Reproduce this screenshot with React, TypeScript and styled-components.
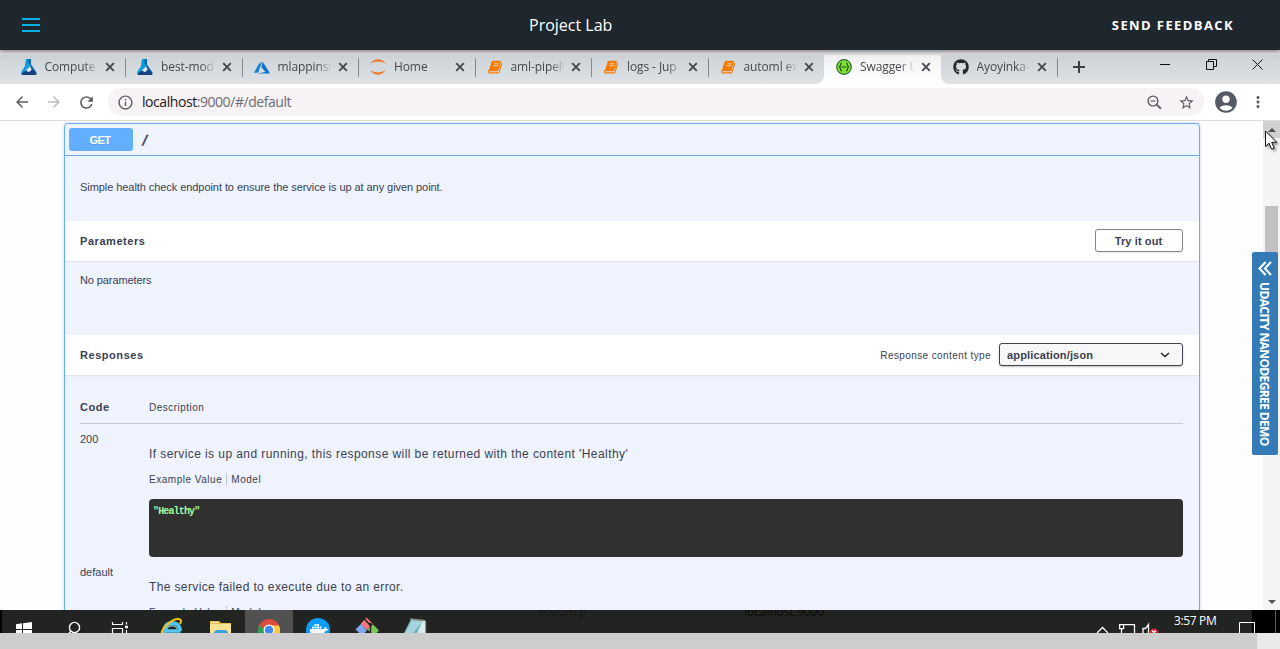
import React, { ReactNode } from "react";
import styled, { createGlobalStyle } from "styled-components";
import {
  MdArrowBack,
  MdArrowForward,
  MdRefresh,
  MdInfoOutline,
  MdStarBorder,
  MdAccountCircle,
  MdMoreVert,
} from "react-icons/md";
import { FaGithub } from "react-icons/fa";

const GlobalStyle = createGlobalStyle`
  * { box-sizing: border-box; }
  body { margin: 0; overflow: hidden; background: #fff; }
  svg { display: block; flex: none; }
`;

const Screen = styled.div`
  position: relative;
  width: 1280px;
  height: 649px;
  display: flex;
  flex-direction: column;
  overflow: hidden;
  font-family: "Liberation Sans", Arial, sans-serif;
  color: #3b4151;
`;

const LabHeader = styled.header`
  height: 50px;
  flex: none;
  display: grid;
  grid-template-columns: 507px auto 1fr;
  align-items: center;
  padding: 0 46px 0 22px;
  background: #1e272e;
  color: #fff;
  font-family: "Open Sans", sans-serif;
  box-shadow: 0 1px 5px rgba(0, 0, 0, 0.55);
  z-index: 2;
`;

const Burger = styled.button`
  width: 18px;
  height: 14px;
  padding: 0;
  border: 0;
  background: none;
  display: flex;
  flex-direction: column;
  justify-content: space-between;
  span { height: 2px; background: #02b3e4; }
`;

const LabTitle = styled.h1`
  margin: 0;
  font-size: 16px;
  line-height: 24px;
  font-weight: 400;
`;

const Feedback = styled.a`
  justify-self: end;
  font-size: 13px;
  font-weight: 700;
  letter-spacing: 1.4px;
`;

const TabStrip = styled.div`
  height: 34px;
  flex: none;
  display: flex;
  border-top: 5px solid #e6e4e4;
  padding-left: 8.5px;
  background: linear-gradient(#ced3d8, #dee2e6);
`;

const Tab = styled.div<{ $active?: boolean; $bare?: boolean }>`
  width: 116.5px;
  height: 29px;
  display: flex;
  align-items: center;
  padding: 0 10px 5px 12px;
  position: relative;
  background: ${(p) => (p.$active ? "linear-gradient(#f1f1f2, #fff)" : "none")};
  &::after {
    content: "";
    display: ${(p) => (p.$bare || p.$active ? "none" : "block")};
    position: absolute;
    right: -1.1px;
    top: 3px;
    height: 19px;
    width: 1px;
    background: #85898e;
  }
`;

const TabCorner = styled.div<{ $side: "left" | "right" }>`
  position: absolute;
  bottom: 0;
  ${(p) => (p.$side === "left" ? "left: -8px" : "right: -8px")};
  width: 8px;
  height: 8px;
  background: radial-gradient(
    circle at ${(p) => (p.$side === "left" ? "0 0" : "100% 0")},
    transparent 7.5px,
    #fff 8px
  );
`;

const TabTitle = styled.span`
  flex: 1;
  margin: 0 5px 0 8px;
  overflow: hidden;
  white-space: nowrap;
  font: 12px/18px "Open Sans", sans-serif;
  letter-spacing: -0.1px;
  color: #45494d;
  mask-image: linear-gradient(90deg, #000 72%, transparent 98%);
`;

const NewTab = styled.div`
  width: 40px;
  padding: 6px 0 0 15.5px;
`;

const WindowButtons = styled.div`
  margin-left: auto;
  display: flex;
  gap: 35px;
  padding: 4px 17.5px 0 0;
`;

const Toolbar = styled.div`
  height: 37px;
  flex: none;
  display: flex;
  align-items: center;
  padding: 0 12px 0 13px;
  background: #fff;
  border-bottom: 1px solid #dcdbe2;
  color: #5a5e63;
`;

const NavButtons = styled.div`
  display: flex;
  gap: 14px;
  width: 95px;
  .dim { color: #bcbdc0; }
`;

const Omnibox = styled.div`
  width: 1096px;
  height: 28px;
  display: flex;
  align-items: center;
  padding: 0 9px;
  border-radius: 14px;
  background: #f6f2f6;
`;

const Url = styled.span`
  flex: 1;
  margin-left: 8px;
  font: 14px/20px "Open Sans", sans-serif;
  letter-spacing: -0.44px;
  color: #6c6c72;
  b { font-weight: 400; color: #202124; }
`;

const OmniActions = styled.div`
  display: flex;
  gap: 15px;
`;

const Profile = styled.div`
  display: flex;
  align-items: center;
  gap: 10px;
  margin-left: 9px;
`;

const Viewport = styled.main`
  height: 489px;
  flex: none;
  display: flex;
  background: #fffcff;
  overflow: hidden;
`;

const Page = styled.div`
  flex: 1;
  padding: 2px 63px 0 64px;
`;

const OpBlock = styled.section`
  height: 600px;
  border: 1px solid #61affe;
  border-radius: 4px;
  background: #eef3fe;
  box-shadow: 0 0 3px rgba(0, 0, 0, 0.19);
  font-size: 11px;
  line-height: 13px;
`;

const OpSummary = styled.div`
  height: 32px;
  display: flex;
  align-items: center;
  padding: 0 4px;
  border-bottom: 1px solid #61a8f0;
`;

const Method = styled.span`
  width: 64px;
  height: 23px;
  margin-right: 8px;
  padding-right: 2px;
  border-radius: 3px;
  background: #61affe;
  color: #fff;
  font-weight: 700;
  letter-spacing: -0.5px;
  line-height: 24px;
  text-align: center;
  text-shadow: 0 1px 0 rgba(0, 0, 0, 0.1);
`;

const Path = styled.b`
  font: 700 13px/16px "DejaVu Sans Mono", monospace;
  -webkit-text-stroke: 0.4px #3b4151;
`;

const Description = styled.div`
  height: 65px;
  padding: 25px 15px 0;
  letter-spacing: -0.065px;
`;

const SectionHeader = styled.div`
  height: 40px;
  display: flex;
  align-items: center;
  padding: 0 16px 0 15px;
  background: #fff;
  box-shadow: 0 1px 1px rgba(0, 0, 0, 0.06);
`;

const Heading = styled.h4`
  flex: 1;
  margin: 0;
  font-size: 11px;
  letter-spacing: 0.55px;
`;

const TryButton = styled.button`
  width: 88px;
  height: 23px;
  margin-top: -1px;
  padding: 0 1px 0 0;
  border: 1px solid #84858c;
  border-radius: 3px;
  background: #fff;
  box-shadow: 0 1px 2px rgba(0, 0, 0, 0.1);
  font: 700 11px "Liberation Sans", sans-serif;
  letter-spacing: 0.1px;
  color: #3b4151;
`;

const TypeLabel = styled.label`
  font-size: 10px;
  letter-spacing: 0.4px;
  margin-right: 8px;
  padding-top: 1px;
`;

const TypeSelect = styled.div`
  width: 184px;
  height: 23px;
  margin-top: -1px;
  display: flex;
  align-items: center;
  justify-content: space-between;
  padding: 1px 12px 0 7px;
  border: 1px solid #41444e;
  border-radius: 3px;
  background: #f7f7f7;
  box-shadow: 0 1px 2px rgba(0, 0, 0, 0.25);
  font-weight: 700;
  letter-spacing: 0.15px;
`;

const NoParameters = styled.div`
  height: 74px;
  padding: 13px 15px 0;
  letter-spacing: -0.1px;
`;

const Responses = styled.div`
  padding: 17px 16px 0 15px;
`;

const Columns = styled.div`
  display: grid;
  grid-template-columns: 69px 1fr;
`;

const ColumnHeads = styled(Columns)`
  height: 32px;
  align-items: center;
  border-bottom: 1px solid #c6cbd9;
`;

const SmallText = styled.span`
  font-size: 10px;
  letter-spacing: 0.48px;
`;

const ResponseRow = styled(Columns)`
  height: 133px;
`;

const Code = styled.span`
  padding-top: 9px;
`;

const ResponseText = styled.p<{ $spacing: number }>`
  margin: 22px 0 0;
  font-size: 12px;
  line-height: 16px;
  letter-spacing: ${(p) => p.$spacing}px;
  white-space: nowrap;
`;

const ModelTabs = styled.div`
  display: flex;
  align-items: center;
  height: 14px;
  margin-top: 10px;
  font-size: 10px;
  letter-spacing: 0.52px;
  span + span {
    margin-left: 4px;
    padding-left: 4px;
    border-left: 1px solid #bfc4d2;
  }
`;

const Sample = styled.pre`
  height: 58px;
  margin: 13px 0 0;
  padding: 7px 4px;
  border-radius: 4px;
  background: #303030;
  color: #a2fca2;
  font: 700 10px/12px "Liberation Mono", monospace;
  letter-spacing: -0.85px;
`;

const ScrollTrack = styled.div`
  width: 17px;
  display: flex;
  flex-direction: column;
  align-items: center;
  background: #f6f3f6;
`;

const ScrollButton = styled.div<{ $pressed?: boolean }>`
  width: 17px;
  height: 17px;
  display: grid;
  place-items: center;
  background: ${(p) => (p.$pressed ? "#d2d0d3" : "transparent")};
`;

const ScrollThumb = styled.div`
  width: 13px;
  height: 120px;
  margin: 68px 0 auto -1px;
  background: #c2c0c3;
`;

const DemoTab = styled.aside`
  position: absolute;
  left: 1252px;
  top: 252px;
  width: 26px;
  height: 203px;
  display: flex;
  flex-direction: column;
  align-items: center;
  padding-top: 9px;
  border-radius: 2px;
  background: #337ab7;
  color: #fff;
  z-index: 3;
`;

const DemoLabel = styled.span`
  margin: 6px 2px 0 0;
  writing-mode: vertical-rl;
  white-space: nowrap;
  font: 700 12px/18px "Open Sans", sans-serif;
  letter-spacing: -0.62px;
`;

const Cursor = styled.svg`
  position: absolute;
  left: 1264px;
  top: 130px;
  filter: drop-shadow(2px 2px 1px rgba(0, 0, 0, 0.35));
  z-index: 4;
`;

const Taskbar = styled.footer`
  position: relative;
  height: 23px;
  flex: none;
  display: flex;
  background: #222421;
  border-left: 2px solid #000;
  overflow: hidden;
`;

const TaskCell = styled.div<{ $w: number; $active?: boolean }>`
  width: ${(p) => p.$w}px;
  flex: none;
  background: ${(p) => (p.$active ? "#515151" : "none")};
`;

const Ghost = styled.span<{ $x: number; $dim?: boolean }>`
  position: absolute;
  left: ${(p) => p.$x}px;
  top: -6px;
  font: 12px/16px "Open Sans", sans-serif;
  letter-spacing: -0.05px;
  color: ${(p) => (p.$dim ? "#161815" : "#090a09")};
`;

const Tray = styled.div`
  margin-left: auto;
  display: flex;
`;

const Clock = styled.span`
  width: 63px;
  padding-left: 9px;
  font: 12px/21px "Open Sans", sans-serif;
  letter-spacing: -0.35px;
  color: #fff;
  white-space: nowrap;
`;

const NotificationIcon = styled.svg`
  position: relative;
  overflow: visible;
  z-index: 1;
`;

const TrayEdge = styled.div`
  width: 28px;
  display: flex;
  justify-content: flex-end;
  padding-right: 4px;
  background: #000;
  span { width: 1px; background: #5a5a5a; }
`;

const BottomScroll = styled.div`
  height: 16px;
  flex: none;
  background: #e9e9e9;
  div { width: 1257px; height: 16px; background: #cdcdcd; }
`;

const Flask = () => (
  <svg width="16" height="16" viewBox="0 0 16 16">
    <path d="M5 0h5v6.500L3 13z" fill="#0b9bdc" />
    <path d="M7.500 0H10v6L7.500 5z" fill="#0068b0" />
    <path d="M5 5.500.5 12.500C-.3 14 .5 16 2 16L8 8.500z" fill="#0f9de0" />
    <path d="m10 5.500 5.200 7.500c.8 1.500 0 3-1.400 3L8.500 9z" fill="#0a62a9" />
    <path d="m4.800 11.800 4-4.300 2 3-2.300 2.200z" fill="#dfe4e8" />
    <path d="M.5 14.800 5 11.500l3 1.700 3-2.700 4.500 4c-.2 1-.9 1.500-1.700 1.500H2c-.8 0-1.300-.4-1.500-1.200z" fill="#173f7d" />
  </svg>
);

const Azure = () => (
  <svg width="16" height="16" viewBox="0 0 16 16">
    <path d="M8.500 2 4.500 5.500 0 13.800h4z" fill="#1180d0" />
    <path d="m9 3 7 11.400H3.200L11.500 13 7.200 8z" fill="#0873c8" />
  </svg>
);

const Jupyter = () => (
  <svg width="16" height="16" viewBox="0 0 16 16">
    <path d="M.6 5C3-1.200 13-1.200 15.400 5 11.500 1.800 4.500 1.800.6 5z" fill="#f37626" />
    <path d="M.6 11c2.400 6.200 12.400 6.200 14.800 0-3.900 3.200-10.900 3.200-14.800 0z" fill="#f37626" />
  </svg>
);

const Notebook = () => (
  <svg width="16" height="16" viewBox="0 0 16 16">
    <path d="M6 1.700h7l1 .5-2.800 9.300-1 .7H2.600L1.800 11.500 4.700 2.400z" fill="#f57c00" />
    <path d="M1.900 11.300c-.8 1.700 0 2.500 1 2.500h8c.7 0 1-.3 1.200-.9L14.700 4" fill="none" stroke="#f57c00" strokeWidth="1.200" />
    <path d="M7 4.800h4.600M6.400 6.700H11" stroke="#fbd2a8" strokeWidth=".9" />
  </svg>
);

const Swagger = () => (
  <svg width="16" height="16" viewBox="0 0 16 16">
    <circle cx="8" cy="8" r="7.300" fill="#7fe22d" stroke="#2e6a3c" strokeWidth="1.200" />
    <path d="M6 4C4 4 5 7 3.500 8 5 9 4 12 6 12M10 4c2 0 1 3 2.500 4-1.500 1-.5 4-2.500 4M5.500 8h5" fill="none" stroke="#23492a" strokeWidth="1.200" />
  </svg>
);

const CloseX = () => (
  <svg width="10" height="10" viewBox="0 0 10 10">
    <path d="m1.200 1.200 7.600 7.600m0-7.600L1.200 8.800" stroke="#46494d" strokeWidth="1.900" />
  </svg>
);

const ZoomOut = () => (
  <svg width="17" height="17" viewBox="0 0 17 17" fill="none" stroke="#5a5e63" strokeWidth="1.400">
    <circle cx="7" cy="7" r="4.900" />
    <path d="M4.500 7h5" strokeWidth="1.200" />
    <path d="m10.600 10.600 4.400 4.200" strokeWidth="1.900" />
  </svg>
);

type TabInfo = { icon: ReactNode; title: string; active?: boolean; bare?: boolean };

const tabs: TabInfo[] = [
  { icon: <Flask />, title: "Compute" },
  { icon: <Flask />, title: "best-mod" },
  { icon: <Azure />, title: "mlappinsi" },
  { icon: <Jupyter />, title: "Home" },
  { icon: <Notebook />, title: "aml-pipeli" },
  { icon: <Notebook />, title: "logs - Jup" },
  { icon: <Notebook />, title: "automl ex", bare: true },
  { icon: <Swagger />, title: "Swagger U", active: true },
  { icon: <FaGithub size={16} color="#23282d" />, title: "Ayoyinka-" },
];

const responses = [
  { code: "200", text: "If service is up and running, this response will be returned with the content 'Healthy'", sample: '"Healthy"', spacing: 0.425 },
  { code: "default", text: "The service failed to execute due to an error.", sample: "", spacing: 0.37 },
];

const Tasks = () => (
  <>
    <TaskCell $w={46}>
      <svg width="46" height="23">
        <path d="M14 14.200 20 13.300V19h-6zM21 13.200l9-1.200v7h-9zM14 20h6v5h-6zM21 20h9v5h-9z" fill="#fff" />
      </svg>
    </TaskCell>
    <TaskCell $w={48}>
      <svg width="48" height="23" fill="none" stroke="#fff" strokeWidth="1.400">
        <circle cx="26.500" cy="17.500" r="5.100" />
        <path d="m23 21-3.500 4" />
      </svg>
    </TaskCell>
    <TaskCell $w={51}>
      <svg width="51" height="23" fill="none" stroke="#fff" strokeWidth="1.200">
        <path d="M16.500 12v2.500h10V12M16.500 25v-6.500h10V25M30.500 12v2.500M30.500 20v4" />
        <path d="M29 17h3" strokeWidth="2.500" />
      </svg>
    </TaskCell>
    <TaskCell $w={49}>
      <svg width="49" height="23" fill="none">
        <path d="M33.500 21H18.500" stroke="#55c8f2" strokeWidth="3.500" />
        <path d="M17 24c0-7 3-11 8.500-11 4.500 0 7.500 3 7.500 8" stroke="#4cc3f0" strokeWidth="4" />
        <path d="M20 19c1-4 9-4.500 10 0" stroke="#b9ecfb" strokeWidth="1" />
        <path d="M14.500 24c0-6 11-15.500 17-15 3 .3 3 2.500 1.500 5" stroke="#f2c419" strokeWidth="2" />
      </svg>
    </TaskCell>
    <TaskCell $w={49}>
      <svg width="49" height="23">
        <path d="M14 11h9l2 2h10v10H14z" fill="#e8bd4d" />
        <path d="M14 14h21v9H14z" fill="#fde494" />
        <path d="M15 12h7v1h-7z" fill="#fff3c4" />
        <path d="M18 23v-1l2-2h10l2 2v1z" fill="#3aa5dc" />
      </svg>
    </TaskCell>
    <TaskCell $w={48} $active>
      <svg width="48" height="23">
        <circle cx="24" cy="20" r="11" fill="#dd4b3e" />
        <path d="M14.500 14.500A11 11 0 0 0 13 20v4h9z" fill="#2a9d57" />
        <path d="M24 15.500h10A11 11 0 0 1 35 20v4h-8z" fill="#fcca3c" />
        <circle cx="24" cy="20" r="5.500" fill="#fff" />
        <circle cx="24" cy="20" r="4.300" fill="#4688f1" />
      </svg>
    </TaskCell>
    <TaskCell $w={49}>
      <svg width="49" height="23">
        <circle cx="25" cy="20" r="12" fill="#0b9cf7" />
        <path d="M17 19h14c.5-1.500 1-2 1.500-2.200.8.500 1 1.500.8 2.200h2c-.5 1.500-1.500 2-3 2-1 2-2.500 4-4.500 4h-7c-3 0-4-3-3.800-6zM19 16.500h2v2h-2zM21.500 16.500h2v2h-2zM24 16.500h2v2h-2zM26.500 16.500h2v2h-2zM21.500 14h2v2h-2zM24 14h2v2h-2z" fill="#fff" />
      </svg>
    </TaskCell>
    <TaskCell $w={49}>
      <svg width="49" height="23">
        <path d="m24.500 7.500 6.500 6.500-6 6-6.500-6z" fill="#f4777e" />
        <path d="m19 14 6 6.500-5 5-6.500-6z" fill="#80a8f5" />
        <path d="m31 14.500 6 6-5 5-6.500-6z" fill="#80c75b" />
        <path d="m22 8.500 6.500 7M28.500 14v9" stroke="#222421" strokeWidth="1.500" />
        <circle cx="28.500" cy="14.500" r="1.700" fill="#222421" />
      </svg>
    </TaskCell>
    <TaskCell $w={49}>
      <svg width="49" height="23">
        <path d="m20 9 14 2-4 12H13z" fill="#6fb0be" />
        <path d="m21 10 11 1.500L22 23h-8z" fill="#a9d3dc" />
        <path d="M32 10.500h2.500V23H26z" fill="#d9edf0" />
        <path d="m19 9 14 1.500" stroke="#8d8d86" strokeWidth="1.500" />
        <path d="M34.800 11v12" stroke="#a78a52" strokeWidth=".8" />
      </svg>
    </TaskCell>
  </>
);

export default function App() {
  return (
    <Screen>
      <GlobalStyle />
      <LabHeader>
        <Burger aria-label="Menu"><span /><span /><span /></Burger>
        <LabTitle>Project Lab</LabTitle>
        <Feedback>SEND FEEDBACK</Feedback>
      </LabHeader>

      <TabStrip>
        {tabs.map((t) => (
          <Tab key={t.title} $active={t.active} $bare={t.bare}>
            {t.active && <TabCorner $side="left" />}
            {t.icon}
            <TabTitle>{t.title}</TabTitle>
            <CloseX />
            {t.active && <TabCorner $side="right" />}
          </Tab>
        ))}
        <NewTab>
          <svg width="12" height="12"><path d="M6 0v12M0 6h12" stroke="#3c4043" strokeWidth="2" /></svg>
        </NewTab>
        <WindowButtons>
          <svg width="11" height="11"><path d="M0 5.500h10" stroke="#111" /></svg>
          <svg width="11" height="11" fill="none" stroke="#111"><path d="M.5 2.500h7v8h-7zM2.500 2.500v-2h8v7h-3" /></svg>
          <svg width="11" height="11"><path d="m.5.5 10 10m0-10-10 10" stroke="#111" /></svg>
        </WindowButtons>
      </TabStrip>

      <Toolbar>
        <NavButtons>
          <MdArrowBack size={18} />
          <MdArrowForward size={18} className="dim" />
          <MdRefresh size={19} />
        </NavButtons>
        <Omnibox>
          <MdInfoOutline size={17} />
          <Url><b>localhost</b>:9000/#/default</Url>
          <OmniActions>
            <ZoomOut />
            <MdStarBorder size={17} />
          </OmniActions>
        </Omnibox>
        <Profile>
          <MdAccountCircle size={26} color="#555b66" />
          <MdMoreVert size={18} />
        </Profile>
      </Toolbar>

      <Viewport>
        <Page>
          <OpBlock>
            <OpSummary>
              <Method>GET</Method>
              <Path>/</Path>
            </OpSummary>
            <Description>
              Simple health check endpoint to ensure the service is up at any given point.
            </Description>
            <SectionHeader>
              <Heading>Parameters</Heading>
              <TryButton>Try it out</TryButton>
            </SectionHeader>
            <NoParameters>No parameters</NoParameters>
            <SectionHeader>
              <Heading>Responses</Heading>
              <TypeLabel>Response content type</TypeLabel>
              <TypeSelect>
                application/json
                <svg width="10" height="6"><path d="m1 1 4 3.500L9 1" fill="none" stroke="#222" strokeWidth="1.500" /></svg>
              </TypeSelect>
            </SectionHeader>
            <Responses>
              <ColumnHeads>
                <Heading>Code</Heading>
                <SmallText>Description</SmallText>
              </ColumnHeads>
              {responses.map((r) => (
                <ResponseRow key={r.code}>
                  <Code>{r.code}</Code>
                  <div>
                    <ResponseText $spacing={r.spacing}>{r.text}</ResponseText>
                    <ModelTabs><span>Example Value</span><span>Model</span></ModelTabs>
                    <Sample>{r.sample}</Sample>
                  </div>
                </ResponseRow>
              ))}
            </Responses>
          </OpBlock>
        </Page>
        <ScrollTrack>
          <ScrollButton $pressed>
            <svg width="8" height="4"><path d="M0 4 4 0l4 4z" fill="#505055" /></svg>
          </ScrollButton>
          <ScrollThumb />
          <ScrollButton>
            <svg width="8" height="4"><path d="m0 0 4 4 4-4z" fill="#505055" /></svg>
          </ScrollButton>
        </ScrollTrack>
      </Viewport>

      <Taskbar>
        <Tasks />
        <Ghost $x={536} $dim>8080/tcp</Ghost>
        <Ghost $x={742}>localhost:9000</Ghost>
        <Tray>
          <svg width="70" height="23" fill="none" stroke="#fff" strokeWidth="1.300">
            <path d="m2 23 5.500-5.500L13 23" />
            <path d="M28 14.600h11.500V23M26.500 19v4M24.600 14.600h4v4h-4z" />
            <path d="M48 23v-4.500h2.500l3-4V23" />
            <circle cx="59" cy="23" r="4.500" fill="#dd2430" stroke="none" />
            <path d="m57 20.500 4 4m0-4-4 4" />
          </svg>
          <Clock>3:57 PM</Clock>
          <NotificationIcon width="24" height="23" fill="none" stroke="#fff">
            <path d="M11.500 25V12.500h15V25" />
          </NotificationIcon>
          <TrayEdge><span /></TrayEdge>
        </Tray>
      </Taskbar>
      <BottomScroll><div /></BottomScroll>

      <DemoTab>
        <svg width="14" height="15" fill="none" stroke="#fff" strokeWidth="2"><path d="M7.500 1 1.500 7.500l6 6.500M13 1 7 7.500l6 6.500" /></svg>
        <DemoLabel>UDACITY NANODEGREE DEMO</DemoLabel>
      </DemoTab>
      <Cursor width="14" height="21" viewBox="0 0 14 21">
        <path d="M1.500 1v15.500l3.600-3.300 2.500 6 2.600-1.100-2.500-5.800h5z" fill="#fff" stroke="#111" />
      </Cursor>
    </Screen>
  );
}
